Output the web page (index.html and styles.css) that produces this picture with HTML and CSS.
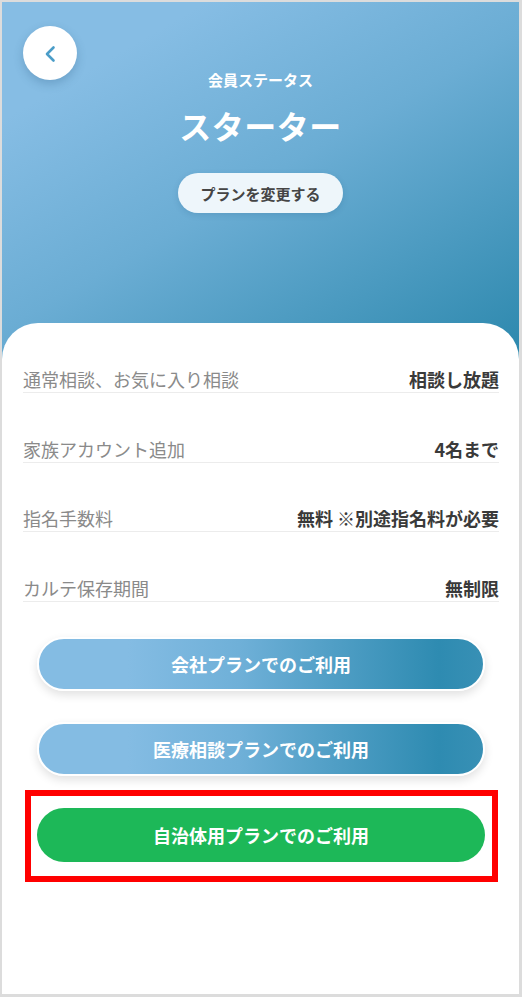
FILE: index.html
```html
<!DOCTYPE html>
<html lang="ja">
<head>
  <meta charset="UTF-8" />
  <meta name="viewport" content="width=device-width, initial-scale=1" />
  <title>会員ステータス</title>
  <link rel="stylesheet" href="styles.css">
</head>
<body>
  <div class="phone">

    <header class="status-head">
      <button class="back-btn" aria-label="戻る">
        <svg width="54" height="54" viewBox="0 0 54 54" aria-hidden="true">
          <path d="M30.5 21.5 L24 28 L30.5 34.5" fill="none" stroke="#4b9dc8" stroke-width="2.6" stroke-linecap="round" stroke-linejoin="round"/>
        </svg>
      </button>
      <p class="status-label">会員ステータス</p>
      <h1 class="status-name">スターター</h1>
      <button class="change-btn">プランを変更する</button>
    </header>

    <main class="plan-card">
      <dl class="benefits">
        <div class="benefit-row">
          <dt>通常相談、お気に入り相談</dt>
          <dd>相談し放題</dd>
        </div>
        <div class="benefit-row">
          <dt>家族アカウント追加</dt>
          <dd>4名まで</dd>
        </div>
        <div class="benefit-row">
          <dt>指名手数料</dt>
          <dd>無料 ※別途指名料が必要</dd>
        </div>
        <div class="benefit-row">
          <dt>カルテ保存期間</dt>
          <dd>無制限</dd>
        </div>
      </dl>

      <div class="plan-actions">
        <button class="plan-btn">会社プランでのご利用</button>
        <button class="plan-btn">医療相談プランでのご利用</button>
        <!-- 赤枠は注釈 -->
        <div class="highlight">
          <button class="plan-btn plan-btn--green">自治体用プランでのご利用</button>
        </div>
      </div>
    </main>

  </div>
</body>
</html>
```

FILE: styles.css
```css
body {
  margin: 0;
  font-family: "Noto Sans CJK JP", "Noto Sans", sans-serif;
  background: #fff;
}

.phone {
  width: 522px;
  height: 997px;
  box-sizing: border-box;
  border: 2px solid #dcdcdc;
  border-right-width: 3px;
  border-bottom-width: 3px;
  overflow: hidden;
  background: #fff;
}

/* ヘッダー */
.status-head {
  position: relative;
  display: flex;
  flex-direction: column;
  align-items: center;
  padding: 68px 0 146px;
  background: linear-gradient(150deg, #86bde4 18%, #6badd4 50%, #2c88ad 100%);
  color: #fff;
}

.back-btn {
  position: absolute;
  top: 24px; left: 21px;
  width: 54px; height: 54px;
  padding: 0;
  border: none;
  border-radius: 50%;
  background: #fff;
  box-shadow: 0 4px 10px rgba(30, 80, 120, 0.25);
  cursor: pointer;
}

.back-btn svg { display: block; }

.status-label {
  margin: 0;
  font-size: 15px;
  line-height: 20px;
  font-weight: 700;
}

.status-name {
  margin: 15px 0 0;
  font-size: 32px;
  line-height: 40px;
  font-weight: 700;
  letter-spacing: 0.5px;
}

.change-btn {
  margin-top: 28px;
  width: 165px;
  height: 40px;
  border: none;
  border-radius: 20px;
  background: rgba(244, 249, 252, 0.96);
  color: #454545;
  font-family: inherit;
  font-size: 15px;
  font-weight: 700;
  box-shadow: 0 2px 6px rgba(20, 70, 110, 0.15);
}

/* カード */
.plan-card {
  position: relative;
  margin-top: -36px;
  padding: 0 20px 0 21px;
  background: #fff;
  border-radius: 36px 36px 0 0;
}

.benefits {
  margin: 0;
  padding-top: 0.5px;
}

.benefit-row {
  display: flex;
  justify-content: space-between;
  align-items: baseline;
  margin-top: 44.5px;
  padding-bottom: 2px;
  border-bottom: 1.5px solid #ececec;
  font-size: 18px;
  line-height: 22px;
}

.benefit-row dt {
  color: #8a8a8a;
}

.benefit-row dd {
  margin: 0;
  color: #3a3a3a;
  font-weight: 700;
}

.plan-actions {
  display: flex;
  flex-direction: column;
  margin-top: 35px;
}

.plan-btn {
  height: 54px;
  margin: 0 14px 31px;
  border: 2px solid #fff;
  border-radius: 27px;
  background: linear-gradient(90deg, #84bce3 20%, #6fb0d8 45%, #2e8bb1 90%, #3890b5 100%);
  color: #fff;
  font-family: inherit;
  font-size: 18px;
  font-weight: 700;
  box-shadow: 0 4px 10px rgba(0, 0, 0, 0.12);
  cursor: pointer;
}

.plan-btn:nth-child(2) {
  margin-bottom: 14px;
}

.highlight {
  display: flex;
  flex-direction: column;
  margin: 0 1px 0 2px;
  padding: 12px 7px 14px 6px;
  border: 6px solid #ff0000;
}

.plan-btn--green {
  margin: 0;
  border: none;
  background: #1db858;
  box-shadow: none;
}
```
